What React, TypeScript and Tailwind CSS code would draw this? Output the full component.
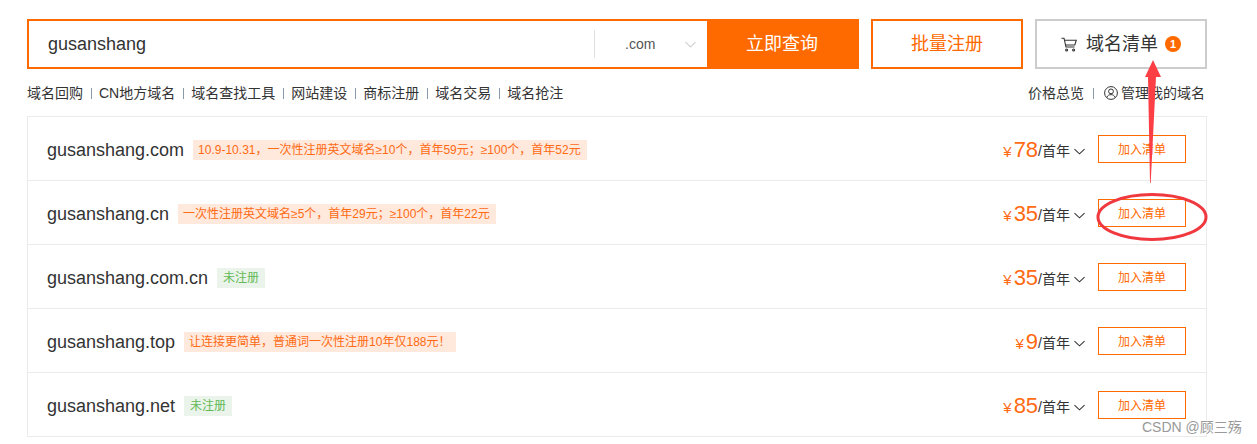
const font = "font-['Liberation_Sans','Noto_Sans_CJK_SC',sans-serif]";

const links = ["域名回购", "CN地方域名", "域名查找工具", "网站建设", "商标注册", "域名交易", "域名抢注"];

type Row = { domain: string; tag: string; green?: boolean; price: string };

const rows: Row[] = [
  { domain: "gusanshang.com", tag: "10.9-10.31，一次性注册英文域名≥10个，首年59元；≥100个，首年52元", price: "78" },
  { domain: "gusanshang.cn", tag: "一次性注册英文域名≥5个，首年29元；≥100个，首年22元", price: "35" },
  { domain: "gusanshang.com.cn", tag: "未注册", green: true, price: "35" },
  { domain: "gusanshang.top", tag: "让连接更简单，普通词一次性注册10年仅188元！", price: "9" },
  { domain: "gusanshang.net", tag: "未注册", green: true, price: "85" },
];

function Chevron({ className }: { className: string }) {
  return (
    <svg viewBox="0 0 12 7" fill="none" stroke="currentColor" strokeWidth="1.1" className={className}>
      <path d="M0.5 0.8 L6 6 L11.5 0.8" />
    </svg>
  );
}

function CartIcon() {
  return (
    <svg viewBox="0 0 16 15" fill="none" stroke="#333" strokeWidth="1.1" className="w-4 h-[15px]">
      <path d="M0.5 1.2 H3 L5 10 H13.5" />
      <path d="M3.4 3.2 H15.3 L13.8 8 H4.5" />
      <circle cx="5.6" cy="13" r="1" />
      <circle cx="12.6" cy="13" r="1" />
    </svg>
  );
}

function UserIcon() {
  return (
    <svg viewBox="0 0 14 14" fill="none" stroke="#333" strokeWidth="1" className="w-[14px] h-[14px]">
      <circle cx="7" cy="7" r="6.4" />
      <circle cx="7" cy="5.4" r="2.4" />
      <path d="M2.8 11.6 C3.6 9.4 5.2 8.6 7 8.6 C8.8 8.6 10.4 9.4 11.2 11.6" />
    </svg>
  );
}

function DomainRow({ row }: { row: Row }) {
  return (
    <div className="flex items-center h-16 border-b border-[#ebebeb] pl-[19px] pr-5">
      <span className="mt-1 text-[18px] text-[#333]">{row.domain}</span>
      <span
        className={
          row.green
            ? "mt-[3px] ml-[9px] h-5 leading-5 px-[6px] text-xs bg-[#eaf4ea] text-[#62b955]"
            : "mt-[3px] ml-[9px] h-5 leading-5 pl-[5px] pr-[6px] text-xs bg-[#ffe9dc] text-[#ff6a13]"
        }
      >
        {row.tag}
      </span>
      <div className="ml-auto flex items-center text-sm text-[#333]">
        <span className="text-[15px] text-[#ff6a13] mt-[7px] mr-[2px]">¥</span>
        <span className="mt-[2px] text-[22px] text-[#ff6a13]">{row.price}</span>
        <span className="mt-[6px]">/首年</span>
        <Chevron className="w-[11px] h-[7px] ml-1 mt-[6px] text-[#333]" />
        <button className="ml-[13px] mt-px w-[88px] h-7 pt-[2px] border border-[#ff6a00] text-xs text-[#ff6a00]">加入清单</button>
      </div>
    </div>
  );
}

export default function App() {
  return (
    <div className={`relative w-[1257px] h-[444px] overflow-hidden bg-white ${font}`}>
      <div className="w-[1180px] ml-[27px] pt-[19px]">
        <div className="flex gap-3 h-[50px]">
          <div className="flex w-[832px] border-2 border-[#ff6a00]">
            <div className="flex-1 flex items-center pl-[19px] text-[18px] text-[#333]">gusanshang</div>
            <div className="flex items-center self-center h-7 w-[113px] border-l border-[#e0e0e0]">
              <span className="ml-[30px] text-sm text-[#555]">.com</span>
              <Chevron className="w-[11px] h-[7px] ml-[30px] text-[#ccc]" />
            </div>
            <button className="w-[152px] -my-[2px] -mr-[2px] pr-[2px] bg-[#ff6a00] text-white text-[18px]">立即查询</button>
          </div>
          <button className="w-[152px] border-2 border-[#ff6a00] text-[#ff6a00] text-[18px]">批量注册</button>
          <button className="w-[172px] border-2 border-[#ccc] flex items-center justify-center text-[#333] text-[18px]">
            <CartIcon />
            <span className="ml-[9px]">域名清单</span>
            <span className="ml-[7px] w-4 h-4 rounded-full bg-[#ff6a00] text-white text-[11px] leading-4 font-bold text-center">1</span>
          </button>
        </div>

        <div className="flex items-center justify-between h-[47px] pt-px text-sm text-[#333]">
          <div className="flex items-center">
            {links.map((l, i) => (
              <span key={l} className="flex items-center">
                {i > 0 && <span className="w-px h-[11px] bg-[#8a9aaa] ml-2 mr-[7px]" />}
                {l}
              </span>
            ))}
          </div>
          <div className="flex items-center pr-[2px]">
            <span>价格总览</span>
            <span className="w-px h-[11px] bg-[#8a9aaa] ml-[9px] mr-[10px]" />
            <UserIcon />
            <span className="ml-[3px]">管理我的域名</span>
          </div>
        </div>

        <div className="border border-b-0 border-[#ebebeb]">
          {rows.map((r) => (
            <DomainRow key={r.domain} row={r} />
          ))}
        </div>
      </div>

      {/* red annotation drawn on top of the screenshot */}
      <svg viewBox="0 0 1257 444" className="absolute inset-0 w-[1257px] h-[444px] pointer-events-none">
        <path d="M1153 60 L1161 77 L1156 77 L1150.7 183 L1150 183 L1148 77 L1145 77 Z" fill="#fb3f45" />
        <ellipse cx="1152" cy="217" rx="54" ry="22.5" fill="none" stroke="#f0393f" strokeWidth="3" />
      </svg>

      <span className="absolute left-[1142px] top-[418px] text-[14px] leading-[18px] text-[#999] [text-shadow:0_0_2px_#fff]">CSDN @顾三殇</span>
    </div>
  );
}
